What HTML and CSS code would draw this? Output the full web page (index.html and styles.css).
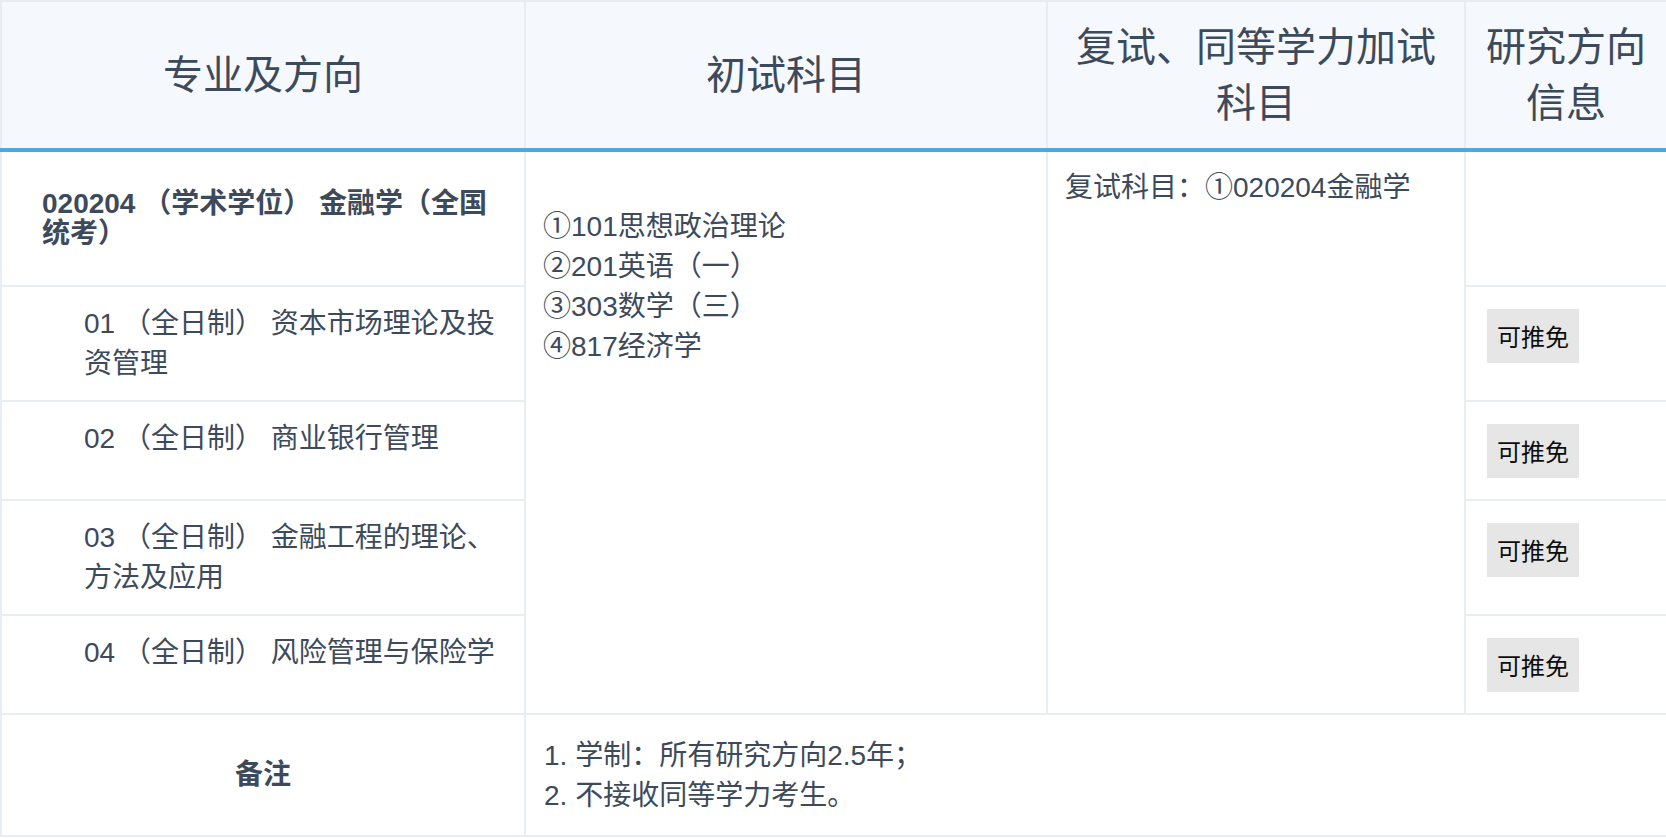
FILE: index.html
```html
<!DOCTYPE html>
<html lang="zh-CN">
<head>
<meta charset="utf-8">
<title>招生专业目录</title>
<link rel="stylesheet" href="styles.css">
</head>
<body>
<table class="plan">
  <colgroup>
    <col class="c-major">
    <col class="c-first">
    <col class="c-retest">
    <col class="c-info">
  </colgroup>
  <thead>
    <tr>
      <th>专业及方向</th>
      <th>初试科目</th>
      <th>复试、同等学力加试科目</th>
      <th>研究方向信息</th>
    </tr>
  </thead>
  <tbody>
    <tr>
      <td class="major-title">020204 （学术学位） 金融学（全国统考）</td>
      <td class="first-subjects" rowspan="5">①101思想政治理论<br>②201英语（一）<br>③303数学（三）<br>④817经济学</td>
      <td class="retest" rowspan="5">复试科目：①020204金融学</td>
      <td class="info"></td>
    </tr>
    <tr>
      <td class="direction">01 （全日制） 资本市场理论及投资管理</td>
      <td class="info"><span class="tag">可推免</span></td>
    </tr>
    <tr>
      <td class="direction">02 （全日制） 商业银行管理</td>
      <td class="info"><span class="tag">可推免</span></td>
    </tr>
    <tr>
      <td class="direction">03 （全日制） 金融工程的理论、方法及应用</td>
      <td class="info"><span class="tag">可推免</span></td>
    </tr>
    <tr>
      <td class="direction">04 （全日制） 风险管理与保险学</td>
      <td class="info"><span class="tag">可推免</span></td>
    </tr>
    <tr>
      <td class="remark-label">备注</td>
      <td class="remark-text" colspan="3">1. 学制：所有研究方向2.5年；<br>2. 不接收同等学力考生。</td>
    </tr>
  </tbody>
</table>
</body>
</html>
```

FILE: styles.css
```css
html, body {
  margin: 0;
  padding: 0;
  background: #ffffff;
  overflow: hidden;
}

body {
  font-family: "Liberation Sans", "Noto Sans CJK SC", sans-serif;
  color: #3d4a5b;
}

.plan {
  border-collapse: collapse;
  table-layout: fixed;
  width: 1666px;
}

.c-major { width: 524px; }
.c-first { width: 522px; }
.c-retest { width: 418px; }
.c-info { width: 202px; }

.plan th,
.plan td {
  border: 2px solid #e7edf2;
}

.plan th {
  background: #f5f8fc;
  font-weight: normal;
  font-size: 40px;
  line-height: 56px;
  padding: 17px 17px;
  text-align: center;
  vertical-align: middle;
  border-bottom: 4px solid #4fa6e0;
}

.plan td {
  font-size: 28px;
  line-height: 40px;
  padding: 16px 17px;
  vertical-align: top;
  text-align: left;
}

.plan td.major-title {
  font-weight: bold;
  line-height: 30px;
  padding: 37px 20px 36px 40px;
  vertical-align: middle;
}

.plan td.direction {
  padding: 17px 20px 16px 82px;
}

.plan td.first-subjects {
  padding-top: 55px;
}

.plan td.info {
  padding: 22px 21px 21px;
}

.tag {
  display: block;
  width: max-content;
  background: #e6e6e6;
  color: #0d0d0d;
  font-family: "Noto Sans CJK SC", sans-serif;
  font-size: 24px;
  line-height: 34px;
  padding: 10px 10px;
}

.plan td.remark-label {
  font-weight: bold;
  text-align: center;
  vertical-align: middle;
  padding: 20px 17px;
}

.plan td.remark-text {
  padding: 21px 18px 19px;
}
```
